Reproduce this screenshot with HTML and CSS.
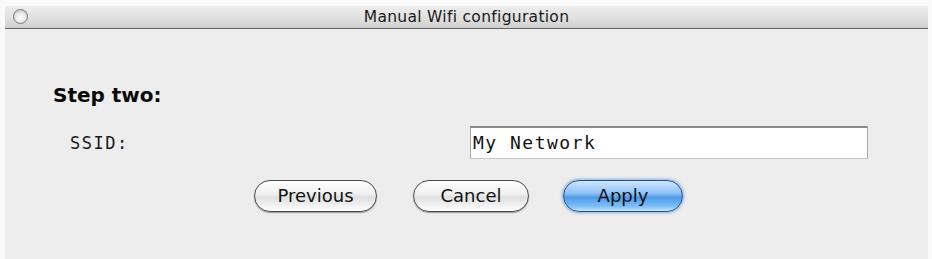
FILE: index.html
```html
<!DOCTYPE html>
<html>
<head>
<meta charset="utf-8">
<link rel="stylesheet" href="styles.css">
</head>
<body>
<div class="window">
  <div class="titlebar">
    <span class="close"></span>
    <span class="title">Manual Wifi configuration</span>
  </div>
  <div class="content">
    <h1 class="step">Step two:</h1>
    <div class="row">
      <label class="label">SSID:</label>
      <div class="field">My Network</div>
    </div>
    <div class="buttons">
      <button class="btn btn-prev">Previous</button>
      <button class="btn btn-cancel">Cancel</button>
      <button class="btn btn-apply">Apply</button>
    </div>
  </div>
</div>
</body>
</html>
```

FILE: styles.css
```css
html, body {
  margin: 0;
  padding: 0;
  background: #fafafa;
  width: 932px;
  height: 259px;
  overflow: hidden;
}
.window {
  margin: 6px 4px 0 5px;
  height: 253px;
  background: #ededed;
  display: flex;
  flex-direction: column;
}
.titlebar {
  position: relative;
  height: 22px;
  background: linear-gradient(#ececec, #e2e2e2 50%, #cfcfcf);
  border-bottom: 1px solid #646464;
  display: flex;
  align-items: center;
  justify-content: center;
}
.close {
  position: absolute;
  left: 8px;
  top: 3px;
  width: 13px;
  height: 13px;
  border-radius: 50%;
  border: 1px solid #7a7a7a;
  background: radial-gradient(circle at 50% 60%, #ffffff 0%, #e4e4e4 55%, #a8a8a8 100%);
}
.title {
  font-family: "DejaVu Sans", sans-serif;
  font-size: 15.5px;
  color: #1a1a1a;
  letter-spacing: 0.3px;
  padding-bottom: 1px;
}
.content {
  padding: 54px 0 0 48px;
  display: flex;
  flex-direction: column;
}
.step {
  margin: 0;
  font-family: "DejaVu Sans", sans-serif;
  font-weight: bold;
  font-size: 20px;
  line-height: 24px;
  color: #0a0a0a;
}
.row {
  margin-top: 19px;
  display: flex;
  align-items: center;
}
.label {
  width: 400px;
  padding-left: 17px;
  box-sizing: border-box;
  font-family: "DejaVu Sans Mono", monospace;
  font-size: 17px;
  letter-spacing: 1.5px;
  color: #1a1a1a;
}
.field {
  height: 30px;
  box-sizing: content-box;
  background: #fff;
  border: 1px solid #a9a9a9;
  border-top: 2px solid #8a8a8a;
  border-bottom-color: #c8c8c8;
  font-family: "DejaVu Sans Mono", monospace;
  font-size: 18px;
  letter-spacing: 1.5px;
  line-height: 30px;
  padding-left: 2px;
  color: #111;
  margin-left: 17px;
  width: 394px;
}
.buttons {
  margin-top: 21px;
  display: flex;
  justify-content: center;
  padding-right: 44px;
}
.btn {
  height: 32px;
  border-radius: 16px;
  border: 1px solid #4a4a4a;
  background: linear-gradient(#fdfdfd, #f2f2f2 40%, #e0e0e0 55%, #f4f4f4 85%, #ffffff);
  box-shadow: 0 1px 1px rgba(0,0,0,0.35);
  font-family: "DejaVu Sans", sans-serif;
  font-size: 18px;
  color: #111;
  padding: 0 0 2px 0;
}
.btn-prev {
  width: 123px;
}
.btn-cancel {
  width: 116px;
  margin-left: 36px;
}
.btn-apply {
  width: 120px;
  margin-left: 34px;
  border-color: #24508f;
  background: linear-gradient(#cfe6fd, #8fc2f6 40%, #4f9ae9 55%, #7fbff8 85%, #bfe8ff);
  box-shadow: 0 0 3px 1px rgba(60,120,200,0.55);
}
```
